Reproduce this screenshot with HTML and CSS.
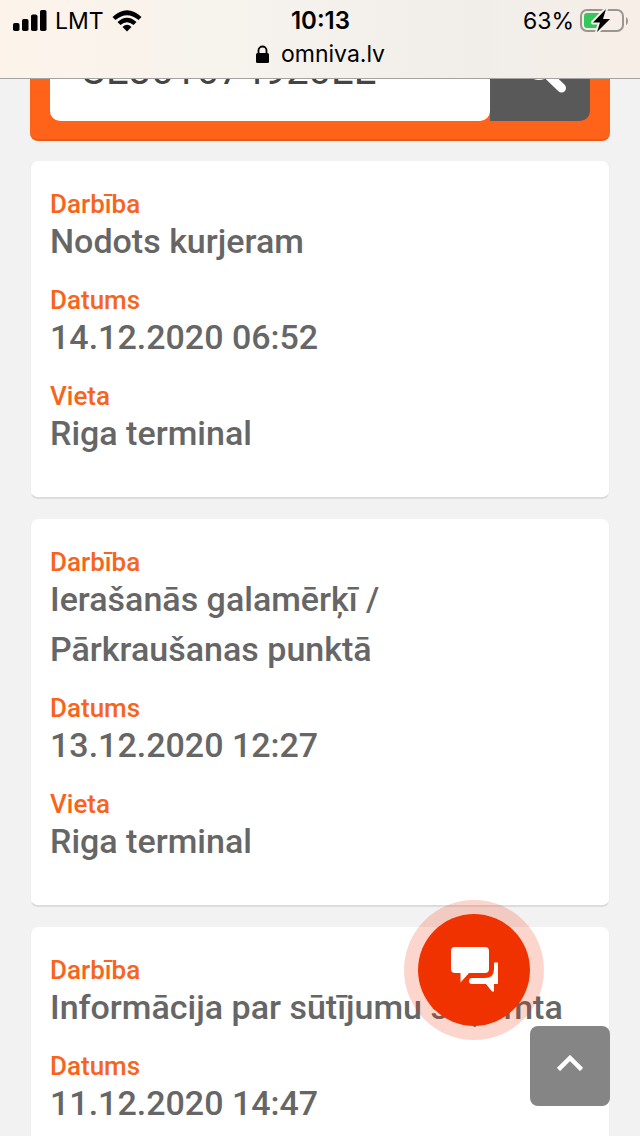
FILE: index.html
```
<!DOCTYPE html>
<html lang="lv">
<head>
<meta charset="utf-8">
<meta name="viewport" content="width=device-width, initial-scale=1">
<title>Omniva</title>
<link rel="stylesheet" href="styles.css">
</head>
<body>
<header class="browser-bar">
  <div class="status">
    <div class="status-side">
      <svg class="signal" viewBox="0 0 34 22" aria-hidden="true"><rect x="0" y="13" width="6.500" height="8" rx="1.800"/><rect x="9" y="9" width="6.500" height="12" rx="1.800"/><rect x="18" y="4.500" width="6.500" height="16.500" rx="1.800"/><rect x="27" y="0" width="6.500" height="21" rx="1.800"/></svg>
      <span class="carrier">LMT</span>
      <svg class="wifi" viewBox="0 0 30 22" aria-hidden="true"><path d="M.5 7Q15-6.500 29.500 7L26.500 10Q15 .5 3.500 10Z"/><path d="M5.500 12Q15 3.500 24.500 12L21.500 15Q15 9.500 8.500 15Z"/><path d="M10.500 17Q15 12.500 19.500 17L15 21.500Z"/></svg>
    </div>
    <time class="clock">10:13</time>
    <div class="status-side status-end">
      <span>63%</span>
      <svg class="battery" viewBox="0 0 48 24" aria-hidden="true"><rect x="1" y="1" width="42" height="21" rx="6" fill="none" stroke="#999591" stroke-width="2"/><path d="M46 8q2 1 2 4t-2 4z" fill="#999591"/><path d="M7 4h16v15H7a3 3 0 0 1-3-3V7a3 3 0 0 1 3-3z" fill="#34c759"/><path d="M26 0L13 13.500h7L17 23l13-13h-7z" fill="#000" stroke="#f5f0ec" stroke-width="4" stroke-linejoin="round" paint-order="stroke"/></svg>
    </div>
  </div>
  <div class="address">
    <svg class="lock" viewBox="0 0 13 19" aria-hidden="true"><rect x="0" y="8" width="13" height="10" rx="1.500"/><path d="M2.500 9V5.500a4 4 0 0 1 8 0V9" fill="none" stroke="#000" stroke-width="1.800"/></svg>
    <span>omniva.lv</span>
  </div>
</header>
<main class="page">
  <form class="search">
    <input class="search-input" type="text" aria-label="Sūtījuma numurs" value="CE301674920EE">
    <button class="search-button" type="button" aria-label="Meklēt"><svg class="search-icon" viewBox="0 0 40 40" aria-hidden="true"><circle cx="13" cy="13" r="11" fill="none" stroke="#fff" stroke-width="6"/><path d="M20 20L35.500 35" stroke="#fff" stroke-width="9" stroke-linecap="round"/></svg></button>
  </form>
  <dl class="card">
    <div class="row"><dt>Darbība</dt><dd>Nodots kurjeram</dd></div>
    <div class="row"><dt>Datums</dt><dd>14.12.2020 06:52</dd></div>
    <div class="row"><dt>Vieta</dt><dd>Riga terminal</dd></div>
  </dl>
  <dl class="card">
    <div class="row"><dt>Darbība</dt><dd>Ierašanās galamērķī /<br>Pārkraušanas punktā</dd></div>
    <div class="row"><dt>Datums</dt><dd>13.12.2020 12:27</dd></div>
    <div class="row"><dt>Vieta</dt><dd>Riga terminal</dd></div>
  </dl>
  <dl class="card">
    <div class="row"><dt>Darbība</dt><dd>Informācija par sūtījumu saņemta</dd></div>
    <div class="row"><dt>Datums</dt><dd>11.12.2020 14:47</dd></div>
  </dl>
</main>
<button class="chat" type="button" aria-label="Tērzēt"><svg class="chat-icon" viewBox="0 0 48 46" aria-hidden="true"><path d="M5 0h30a4 4 0 0 1 4 4v18a4 4 0 0 1-4 4H19l-8.500 9.500V26H5a4 4 0 0 1-4-4V4a4 4 0 0 1 4-4z"/><path d="M44 15.500H48V37H44V44.500H42L36 37H22a3 3 0 0 1 0-6H35Q44 31 44 22Z"/></svg></button>
<button class="to-top" type="button" aria-label="Uz augšu"><svg class="chevron" viewBox="0 0 26 16" aria-hidden="true"><path d="M1.500 14.500L13 3L24.500 14.500" fill="none" stroke="#fff" stroke-width="4.500"/></svg></button>
</body>
</html>
```
FILE: styles.css
```
* { box-sizing: border-box; }
body {
  margin: 0;
  background: #f2f2f2;
  color: #666;
  font-family: Roboto, sans-serif;
  height: 100vh;
  overflow: hidden;
}
.browser-bar {
  position: fixed;
  top: 0;
  left: 0;
  right: 0;
  z-index: 2;
  height: 79px;
  padding: 6px 12px 0 13px;
  border-bottom: 1px solid #a5a29f;
  background: linear-gradient(90deg, #fdf3eb, #f6f3ee 40%, #f1eeea 75%, #f7eee7);
  color: #000;
  font-family: Inter, sans-serif;
  font-size: 23px;
}
.status { display: grid; grid-template-columns: 1fr auto 1fr; align-items: center; height: 28px; }
.status-side { display: flex; align-items: center; gap: 8px; }
.status-end { justify-content: flex-end; gap: 6px; }
.clock { font-size: 24px; font-weight: 600; }
.signal { width: 34px; height: 22px; }
.wifi { width: 30px; height: 22px; }
.battery { width: 48px; height: 24px; }
.address { display: flex; justify-content: center; align-items: center; gap: 12px; height: 40px; }
.lock { width: 13px; height: 19px; }
.page { padding: 21px 30px 0; }
.search {
  display: flex;
  padding: 20px 20px 18px;
  border-bottom: 2px solid #e55b18;
  border-radius: 8px;
  background: #ff6319;
}
.search-input {
  flex: 1;
  min-width: 0;
  height: 80px;
  padding: 0 30px 22px;
  border: 0;
  border-radius: 10px;
  background: #fff;
  color: #444;
  font: 40px Roboto, sans-serif;
}
.search-button {
  display: flex;
  align-items: center;
  justify-content: center;
  width: 100px;
  padding: 0 0 16px 12px;
  border: 0;
  border-radius: 0 10px 10px 0;
  background: #595959;
}
.search-icon { width: 40px; height: 40px; }
.card {
  margin: 20px 0 0;
  padding: 31px 19px 17px;
  border: solid;
  border-width: 0 1px 2px;
  border-color: #eee #eee #dcdcdc;
  border-radius: 8px;
  background: #fff;
  font-weight: 500;
}
.row { padding-bottom: 22px; }
.row dt { color: #f8641c; font-size: 26px; line-height: 24px; }
.row dd { margin: 0; font-size: 34px; line-height: 50px; }
.chat {
  position: fixed;
  right: 96px;
  bottom: 96px;
  display: flex;
  align-items: center;
  justify-content: center;
  width: 140px;
  height: 140px;
  padding: 0;
  border: 14px solid rgba(240, 50, 0, 0.2);
  border-radius: 50%;
  background: #f03200;
  background-clip: padding-box;
}
.chat-icon { width: 48px; height: 46px; fill: #fff; }
.to-top {
  position: fixed;
  right: 30px;
  bottom: 30px;
  display: flex;
  align-items: center;
  justify-content: center;
  width: 80px;
  height: 80px;
  padding: 0 0 6px;
  border: 0;
  border-radius: 8px;
  background: #858585;
}
.chevron { width: 26px; height: 16px; }
```
